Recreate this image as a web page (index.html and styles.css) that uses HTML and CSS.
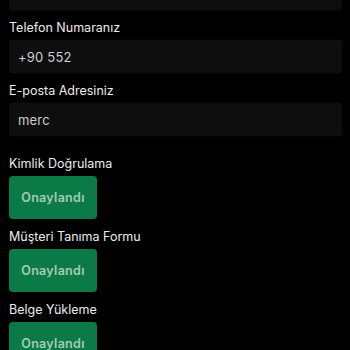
FILE: index.html
```html
<!DOCTYPE html>
<html lang="tr">
<head>
<meta charset="utf-8">
<link rel="stylesheet" href="styles.css">
</head>
<body>
<div class="form">
  <div class="field">
    <div class="input"></div>
  </div>
  <div class="field">
    <div class="label">Telefon Numaranız</div>
    <div class="input"><span class="value">+90 552</span></div>
  </div>
  <div class="field">
    <div class="label">E-posta Adresiniz</div>
    <div class="input"><span class="value">merc</span></div>
  </div>
  <div class="field status">
    <div class="label">Kimlik Doğrulama</div>
    <div class="btn">Onaylandı</div>
  </div>
  <div class="field">
    <div class="label">Müşteri Tanıma Formu</div>
    <div class="btn">Onaylandı</div>
  </div>
  <div class="field">
    <div class="label">Belge Yükleme</div>
    <div class="btn">Onaylandı</div>
  </div>
</div>
</body>
</html>
```
FILE: styles.css
```css
html, body {
  margin: 0;
  padding: 0;
  background: #000;
  height: 100%;
  overflow: hidden;
}
body {
  font-family: Inter, "Noto Sans", sans-serif;
  color: #ececec;
}
.form {
  display: flex;
  flex-direction: column;
  padding: 0 9px;
  margin-top: -23px;
}
.field {
  display: flex;
  flex-direction: column;
}
.label {
  font-size: 12.5px;
  line-height: 20px;
  padding-top: 8px;
  margin-bottom: 2px;
}
.field.status .label {
  padding-top: 18px;
}
.input {
  height: 33px;
  background: #0e0e0e;
  border-radius: 2px;
  display: flex;
  align-items: center;
  padding-left: 9px;
  box-shadow: 1px 0 2px rgba(30,30,30,0.6);
}
.value {
  font-size: 13px;
  color: #cfcfcf;
  letter-spacing: 0.2px;
}
.btn {
  width: 88px;
  height: 43px;
  background: #0b7a47;
  border-radius: 4px;
  display: flex;
  align-items: center;
  justify-content: center;
  font-size: 12.5px;
  font-weight: 600;
  color: #a3ccb5;
  letter-spacing: 0.3px;
}
```
